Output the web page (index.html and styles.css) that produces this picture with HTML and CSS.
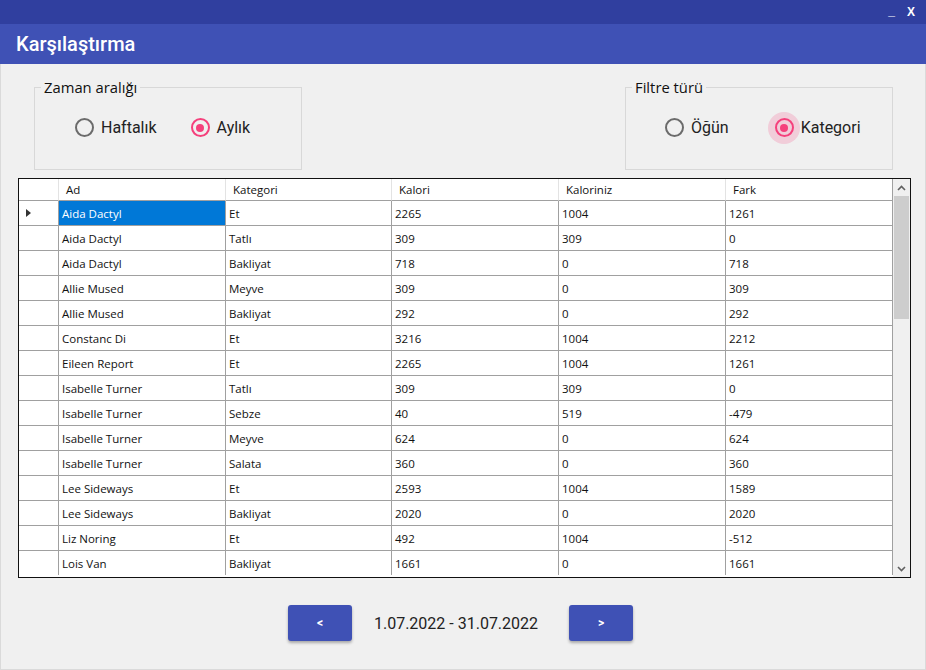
FILE: index.html
```html
<!DOCTYPE html>
<html lang="tr">
<head>
<meta charset="utf-8">
<title>Karşılaştırma</title>
<link rel="stylesheet" href="styles.css">
</head>
<body>
<div class="window">
  <div class="topbar">
    <span class="tb-min">_</span>
    <span class="tb-close">X</span>
  </div>
  <div class="header">Karşılaştırma</div>
  <div class="content">
    <div class="filters">
      <fieldset class="group">
        <legend>Zaman aralığı</legend>
        <div class="radios">
          <label class="radio"><span class="dot"></span><span class="rtext">Haftalık</span></label>
          <label class="radio checked"><span class="dot"></span><span class="rtext">Aylık</span></label>
        </div>
      </fieldset>
      <fieldset class="group">
        <legend>Filtre türü</legend>
        <div class="radios wide">
          <label class="radio"><span class="dot"></span><span class="rtext">Öğün</span></label>
          <label class="radio checked focus"><span class="dot"></span><span class="rtext">Kategori</span></label>
        </div>
      </fieldset>
    </div>

    <div class="grid">
      <table class="table">
        <colgroup>
          <col class="c-rh"><col class="c-ad"><col class="c-kat"><col class="c-kal"><col class="c-kalz"><col class="c-fark">
        </colgroup>
        <thead>
          <tr><th class="rh"></th><th>Ad</th><th>Kategori</th><th>Kalori</th><th>Kaloriniz</th><th>Fark</th></tr>
        </thead>
        <tbody>
          <tr><td class="rh"><span class="arrow"></span></td><td class="sel">Aida Dactyl</td><td>Et</td><td>2265</td><td>1004</td><td>1261</td></tr>
          <tr><td class="rh"></td><td>Aida Dactyl</td><td>Tatlı</td><td>309</td><td>309</td><td>0</td></tr>
          <tr><td class="rh"></td><td>Aida Dactyl</td><td>Bakliyat</td><td>718</td><td>0</td><td>718</td></tr>
          <tr><td class="rh"></td><td>Allie Mused</td><td>Meyve</td><td>309</td><td>0</td><td>309</td></tr>
          <tr><td class="rh"></td><td>Allie Mused</td><td>Bakliyat</td><td>292</td><td>0</td><td>292</td></tr>
          <tr><td class="rh"></td><td>Constanc Di</td><td>Et</td><td>3216</td><td>1004</td><td>2212</td></tr>
          <tr><td class="rh"></td><td>Eileen Report</td><td>Et</td><td>2265</td><td>1004</td><td>1261</td></tr>
          <tr><td class="rh"></td><td>Isabelle Turner</td><td>Tatlı</td><td>309</td><td>309</td><td>0</td></tr>
          <tr><td class="rh"></td><td>Isabelle Turner</td><td>Sebze</td><td>40</td><td>519</td><td>-479</td></tr>
          <tr><td class="rh"></td><td>Isabelle Turner</td><td>Meyve</td><td>624</td><td>0</td><td>624</td></tr>
          <tr><td class="rh"></td><td>Isabelle Turner</td><td>Salata</td><td>360</td><td>0</td><td>360</td></tr>
          <tr><td class="rh"></td><td>Lee Sideways</td><td>Et</td><td>2593</td><td>1004</td><td>1589</td></tr>
          <tr><td class="rh"></td><td>Lee Sideways</td><td>Bakliyat</td><td>2020</td><td>0</td><td>2020</td></tr>
          <tr><td class="rh"></td><td>Liz Noring</td><td>Et</td><td>492</td><td>1004</td><td>-512</td></tr>
          <tr class="last"><td class="rh"></td><td>Lois Van</td><td>Bakliyat</td><td>1661</td><td>0</td><td>1661</td></tr>
        </tbody>
      </table>
      <div class="scrollbar">
        <div class="sb-btn">
          <svg width="9" height="6" viewBox="0 0 9 6"><path d="M1 5 L4.5 1.5 L8 5" fill="none" stroke="#606060" stroke-width="1.6"/></svg>
        </div>
        <div class="sb-track"><div class="sb-thumb"></div></div>
        <div class="sb-btn">
          <svg width="9" height="6" viewBox="0 0 9 6"><path d="M1 1 L4.5 4.5 L8 1" fill="none" stroke="#606060" stroke-width="1.6"/></svg>
        </div>
      </div>
    </div>

    <div class="pager">
      <button class="pbtn">&lt;</button>
      <span class="range">1.07.2022 - 31.07.2022</span>
      <button class="pbtn next">&gt;</button>
    </div>
  </div>
</div>
</body>
</html>
```

FILE: styles.css
```css
* { box-sizing: border-box; }

html, body {
  margin: 0;
  padding: 0;
}

body {
  width: 926px;
  height: 670px;
  overflow: hidden;
  background: #f0f0f0;
  font-family: Roboto, "Noto Sans", sans-serif;
}

.window {
  width: 926px;
  height: 670px;
  display: flex;
  flex-direction: column;
  background: #f0f0f0;
}

.topbar {
  height: 24px;
  background: #303f9f;
  display: flex;
  justify-content: flex-end;
  align-items: flex-start;
  color: #fff;
  font-family: "Liberation Sans", sans-serif;
  font-weight: bold;
  padding-right: 11px;
}

.tb-min {
  font-size: 12px;
  line-height: 12px;
  margin-top: 5px;
  margin-right: 12px;
}

.tb-close {
  font-size: 12px;
  line-height: 12px;
  margin-top: 6px;
}

.header {
  height: 40px;
  background: #3f51b5;
  color: #fff;
  font-family: Roboto, sans-serif;
  font-weight: 500;
  font-size: 20px;
  line-height: 40px;
  padding-left: 16px;
}

.content {
  flex: 1;
  display: flex;
  flex-direction: column;
  border-left: 1px solid #dadada;
  border-right: 1px solid #dadada;
  border-bottom: 1px solid #dadada;
}

.filters {
  display: flex;
  justify-content: space-between;
  padding: 14px 32px 0 33px;
}

.group {
  margin: 0;
  padding: 0;
  width: 268px;
  height: 92px;
  border: 1px solid #d8d8d8;
  border-radius: 0;
  min-width: 0;
}

.group legend {
  font-family: "Open Sans", "Noto Sans", sans-serif;
  font-size: 14.8px;
  line-height: 18px;
  color: #111;
  margin-left: 6px;
  padding: 0 3px;
}

.radios {
  display: flex;
  align-items: center;
  margin-top: 22px;
  padding-left: 40px;
  gap: 34px;
}

.radios.wide {
  gap: 46px;
  padding-left: 39px;
}

.radio {
  display: flex;
  align-items: center;
  font-family: Roboto, sans-serif;
  font-size: 16px;
  color: #222;
  position: relative;
}

.dot {
  width: 19px;
  height: 19px;
  border: 2px solid #6b6b6b;
  border-radius: 50%;
  margin-right: 7px;
  position: relative;
  flex: none;
}

.radio.checked .dot {
  border-color: #f5407c;
}

.radio.checked .dot::after {
  content: "";
  position: absolute;
  left: 3.5px;
  top: 3.5px;
  width: 8px;
  height: 8px;
  border-radius: 50%;
  background: #f5407c;
}

.radio.focus .dot::before {
  content: "";
  position: absolute;
  left: -8.5px;
  top: -8.5px;
  width: 32px;
  height: 32px;
  border-radius: 50%;
  background: rgba(245, 64, 124, 0.2);
}

.rtext {
  line-height: 19px;
}

/* grid */
.grid {
  margin: 8px 0 0 17px;
  width: 893px;
  height: 400px;
  border: 1px solid #111;
  background: #fff;
  display: flex;
}

.table {
  width: 874px;
  table-layout: fixed;
  border-collapse: separate;
  border-spacing: 0;
  font-family: "Open Sans", "Noto Sans", sans-serif;
  font-size: 11.5px;
  color: #111;
  align-self: flex-start;
}

.c-rh { width: 40px; }
.c-ad { width: 167px; }
.c-kat { width: 166px; }
.c-kal { width: 167px; }
.c-kalz { width: 167px; }
.c-fark { width: 167px; }

.table th {
  height: 22px;
  font-weight: normal;
  text-align: left;
  padding: 0 0 0 7px;
  border-right: 1px solid #e3e3e3;
  border-bottom: 1px solid #a0a0a0;
  background: #fff;
  white-space: nowrap;
}

.table th:last-child {
  border-right: 1px solid #a0a0a0;
}

.table td {
  height: 25px;
  padding: 0 0 0 3px;
  border-right: 1px solid #a0a0a0;
  border-bottom: 1px solid #a0a0a0;
  white-space: nowrap;
  overflow: hidden;
}

.table tr.last td {
  border-bottom: none;
  height: 24px;
}

.table .rh {
  padding: 0;
  position: relative;
}

.table td.sel {
  background: #0078d7;
  color: #fff;
}

.arrow {
  display: block;
  width: 0;
  height: 0;
  margin-left: 7px;
  border-top: 4px solid transparent;
  border-bottom: 4px solid transparent;
  border-left: 5px solid #333;
}

.scrollbar {
  width: 17px;
  height: 100%;
  background: #f0f0f0;
  display: flex;
  flex-direction: column;
}

.sb-btn {
  height: 17px;
  display: flex;
  align-items: center;
  justify-content: center;
}

.sb-track {
  flex: 1;
  padding: 0 1px;
}

.sb-thumb {
  height: 123px;
  background: #cdcdcd;
}

/* pager */
.pager {
  display: flex;
  justify-content: center;
  align-items: center;
  margin-top: 27px;
  padding-right: 5px;
}

.pbtn {
  width: 64px;
  height: 36px;
  border: none;
  border-radius: 3px;
  background: #3f51b5;
  color: #fff;
  font-family: Roboto, sans-serif;
  font-weight: bold;
  font-size: 12px;
  box-shadow: 0 2px 3px rgba(0, 0, 0, 0.3);
  padding: 0;
}

.range {
  font-family: Roboto, sans-serif;
  font-size: 16px;
  color: #222;
  margin: 0 31px 0 22px;
}
```
